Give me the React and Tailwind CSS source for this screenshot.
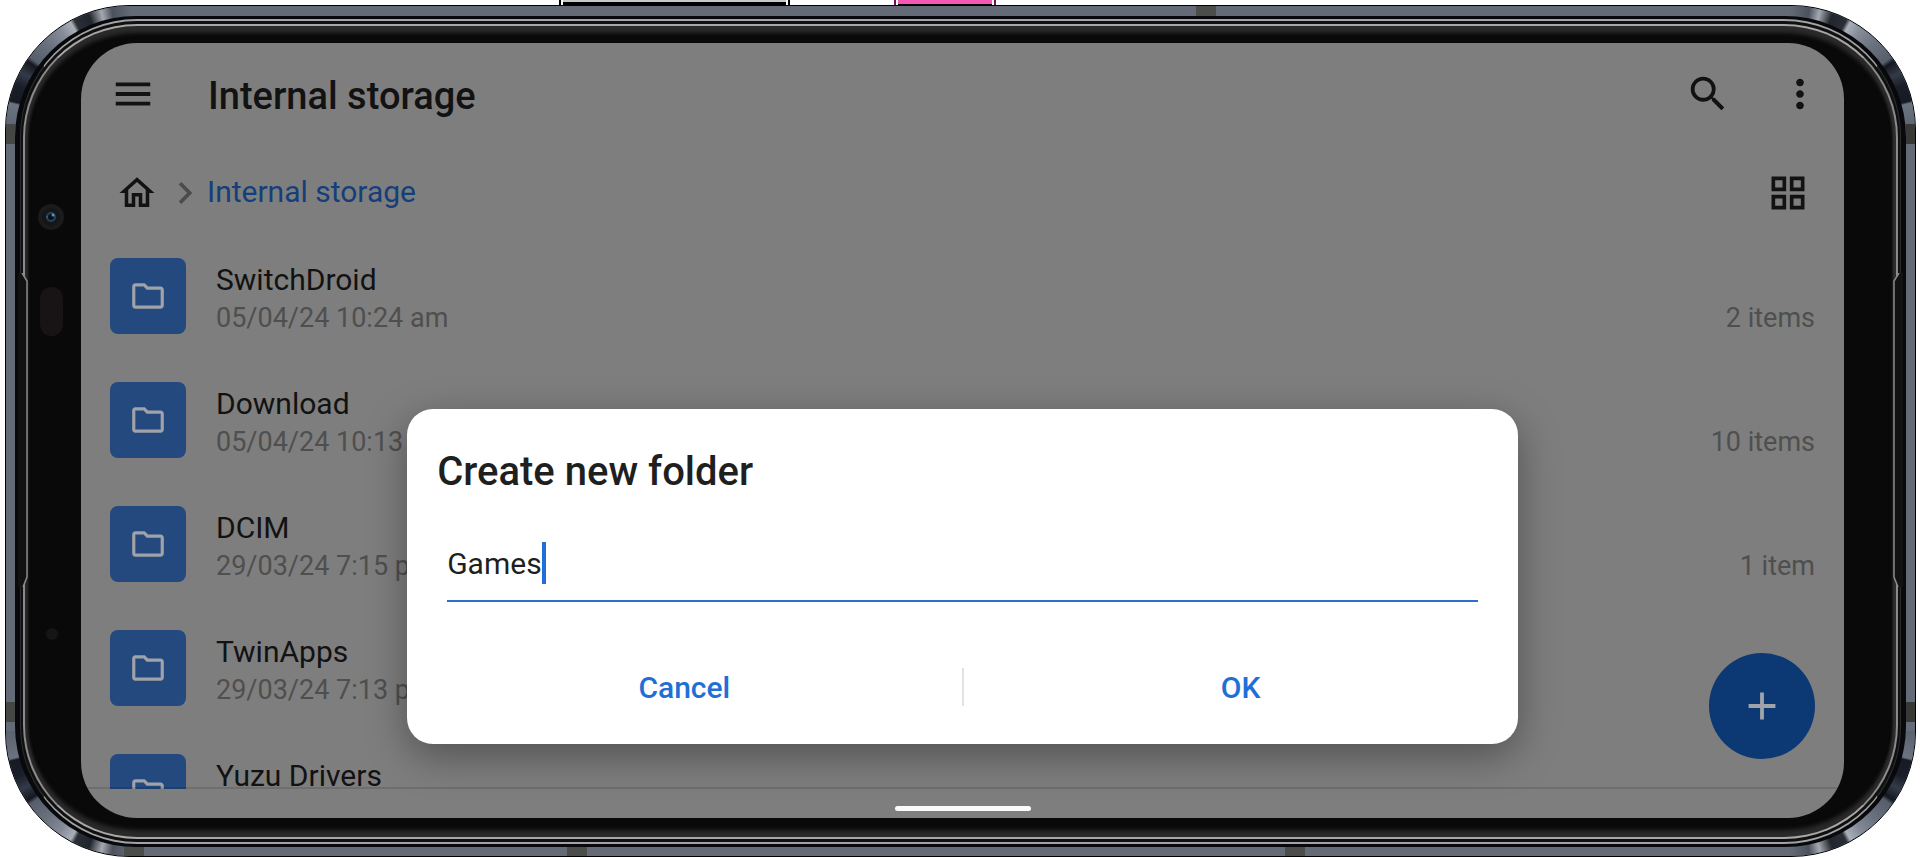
import { useState } from 'react'
import {
  MdAdd,
  MdChevronRight,
  MdMenu,
  MdMoreVert,
  MdOutlineFolder,
  MdOutlineGridView,
  MdOutlineHome,
  MdSearch,
} from 'react-icons/md'

const folders = [
  { name: 'SwitchDroid', date: '05/04/24 10:24 am', count: '2 items' },
  { name: 'Download', date: '05/04/24 10:13 am', count: '10 items' },
  { name: 'DCIM', date: '29/03/24 7:15 pm', count: '1 item' },
  { name: 'TwinApps', date: '29/03/24 7:13 pm', count: '' },
  { name: 'Yuzu Drivers', date: '', count: '' },
]

// Reflections along a quarter turn of the metal rim
function RimCorner({ className }) {
  return (
    <span
      className={`absolute size-[125px] rounded-tl-[124px] bg-[conic-gradient(from_270deg_at_100%_100%,#5b6270_0deg,#6c7380_13deg,#161a22_14deg,#1a1e29_22deg,#343a48_28deg,#14171f_34deg,#565d6b_36deg,#6a717e_46deg,#858c98_55deg,#aab0b9_61deg,#2a2e36_63deg,#20242c_70deg,#a4a9b1_76deg,#4b525e_81deg,#646b77_90deg)] ${className}`}
    />
  )
}

function SideGrip({ className }) {
  return (
    <svg className={`absolute h-[314px] w-[12px] ${className}`} viewBox="0 0 12 314" aria-hidden="true">
      <path d="M0 0H4L9 8V304L5 314H0Z" fill="#121212" />
      <path d="M4 0L9 8V304L5 314" fill="none" stroke="#8a8a8a" strokeWidth="1.5" />
    </svg>
  )
}

function PhoneFrame({ children }) {
  return (
    <div className="relative flex min-h-0 flex-1 rounded-[125px] border border-black bg-[#646b77] px-[9px] pt-[10px] pb-[9px]">
      <RimCorner className="top-0 left-0" />
      <RimCorner className="top-0 right-0 -scale-x-100" />
      <RimCorner className="bottom-0 left-0 -scale-y-100" />
      <RimCorner className="right-0 bottom-0 -scale-100" />

      {/* Antenna bands */}
      <span className="absolute top-0 left-[1190px] h-[10px] w-[20px] bg-[#4b4d4b]" />
      <span className="absolute bottom-0 left-[118px] h-[9px] w-[20px] bg-[#4b4d4b]" />
      <span className="absolute bottom-0 left-[561px] h-[9px] w-[20px] bg-[#4b4d4b]" />
      <span className="absolute bottom-0 left-[1279px] h-[9px] w-[20px] bg-[#4b4d4b]" />
      <span className="absolute top-[118px] left-0 h-[20px] w-[9px] bg-[#454744]" />
      <span className="absolute bottom-[134px] left-0 h-[20px] w-[9px] bg-[#454744]" />
      <span className="absolute top-[118px] right-0 h-[20px] w-[9px] bg-[#383936]" />
      <span className="absolute right-0 bottom-[134px] h-[20px] w-[9px] bg-[#383936]" />

      <div className="relative flex min-w-0 flex-1 rounded-[121px] bg-[#08090c] px-[5px] py-[3px]">
        <div className="flex min-w-0 flex-1 rounded-[117px] border-x border-y-2 border-x-[#2c2c2c] border-y-[#a3a3a5] bg-[#101010] px-[2px] py-[3px]">
          <div className="flex min-w-0 flex-1 rounded-[114px] border-x-2 border-y-2 border-x-[#8b8b8b] border-y-[#a8a6a6] bg-[#090909] pt-[17px] pr-[52px] pb-[19px] pl-[56px] shadow-[inset_0_7px_4px_#2a2a2a,inset_0_-7px_4px_#2a2a2a,inset_3px_0_3px_#2c2c2c,inset_-3px_0_3px_#3a3a3a]">
            {children}
          </div>
        </div>
        <SideGrip className="top-[257px] left-[3px]" />
        <SideGrip className="top-[257px] right-[3px] -scale-x-100" />

        {/* Camera and sensors */}
        <svg className="absolute top-[187px] left-[22px] size-[28px]" viewBox="0 0 28 28" aria-hidden="true">
          <circle cx="14" cy="14" r="13" fill="#1b1b1c" />
          <circle cx="14" cy="14" r="9" fill="#141618" />
          <circle cx="14" cy="14" r="5" fill="#27445c" />
          <circle cx="14" cy="14" r="3" fill="#0a1018" />
          <circle cx="16" cy="12" r="1.5" fill="#5f91b8" />
          <circle cx="10" cy="14" r="1" fill="#38617f" />
        </svg>
        <span className="absolute top-[271px] left-[25px] h-[49px] w-[23px] rounded-full bg-[#181314]" />
        <span className="absolute top-[612px] left-[31px] size-[12px] rounded-full bg-[#151515]" />
      </div>
    </div>
  )
}

function FolderRow({ folder }) {
  return (
    <li className="flex items-start">
      <span className="flex size-[76px] shrink-0 items-center justify-center rounded-lg bg-[#23497f] text-[#a0a3a8]">
        <MdOutlineFolder size={38} />
      </span>
      <div className="ml-[30px] flex-1 pt-[3px]">
        <p className="text-[30px] leading-[38px] text-[#121212]">{folder.name}</p>
        <div className="flex h-[38px] justify-between text-[27px] leading-[38px] text-[#4f4f4f]">
          <span>{folder.date}</span>
          <span>{folder.count}</span>
        </div>
      </div>
    </li>
  )
}

function CreateFolderDialog() {
  const [name, setName] = useState('Games')

  return (
    <div className="absolute inset-0 flex items-end justify-center pb-[74px]">
      <div
        role="dialog"
        aria-labelledby="dialog-title"
        className="w-[63%] rounded-[26px] bg-white pt-10 pb-[38px] shadow-[0_12px_40px_rgba(0,0,0,0.35)]"
      >
        <h2 id="dialog-title" className="px-[30px] text-[40px] leading-[46px] font-medium text-[#1f1f1f]">
          Create new folder
        </h2>
        <div className="mx-10 mt-[46px] flex items-center border-b-2 border-[#2b70c9] pb-[15px]">
          <input
            type="text"
            aria-labelledby="dialog-title"
            value={name}
            onChange={(e) => setName(e.target.value)}
            className="field-sizing-content h-11 text-[30px] text-[#1f1f1f] caret-transparent outline-none"
          />
          <span className="h-[42px] w-[4px] bg-[#1f6fd6]" />
        </div>
        <div className="mt-[66px] flex h-[38px] items-center text-[30px] font-medium text-[#1f6fd6]">
          <button type="button" className="flex-1">
            Cancel
          </button>
          <span className="h-full w-[2px] bg-[#e2e2e2]" />
          <button type="button" className="flex-1">
            OK
          </button>
        </div>
      </div>
    </div>
  )
}

export default function App() {
  return (
    <div className="flex h-screen flex-col overflow-hidden bg-white pr-1 pb-px pl-[5px] font-['Roboto',sans-serif]">
      {/* Side buttons poking out above the frame */}
      <div className="flex h-[5px] shrink-0 gap-[104px] pl-[554px]">
        <div className="w-[231px] border-x-2 border-black px-[2px]">
          <div className="h-full border-b-3 border-black bg-[#c5c8cd]" />
        </div>
        <div className="w-[102px] border-x-2 border-[#6d1549] px-[2px]">
          <div className="h-full border-b border-black bg-[#f458b4]" />
        </div>
      </div>

      <PhoneFrame>
        <div className="relative flex min-w-0 flex-1 flex-col overflow-hidden rounded-[56px] bg-[#7e7e7e]">
          <header className="flex shrink-0 items-center pt-7 pr-[21px] pl-[29px] text-[#121212]">
            <button type="button" aria-label="Menu">
              <MdMenu size={46} />
            </button>
            <h1 className="ml-[52px] flex-1 pt-1 text-[38px] leading-[42px] font-medium">Internal storage</h1>
            <button type="button" aria-label="Search">
              <MdSearch size={46} />
            </button>
            <button type="button" aria-label="More options" className="ml-[46px]">
              <MdMoreVert size={46} />
            </button>
          </header>

          <nav className="mt-[54px] flex h-11 shrink-0 items-center pr-[34px] pl-[35px] text-[#121212]">
            <a href="#home" aria-label="Home">
              <MdOutlineHome size={42} />
            </a>
            <MdChevronRight size={44} className="ml-[5px] text-[#4c4c4c]" />
            <a href="#internal" className="flex-1 pb-[2px] text-[30px] leading-[38px] text-[#143f7b]">
              Internal storage
            </a>
            <button type="button" aria-label="Grid view">
              <MdOutlineGridView size={44} />
            </button>
          </nav>

          <ul className="mt-[43px] flex min-h-0 flex-1 flex-col gap-[45px] overflow-hidden px-[29px]">
            {folders.map((folder) => (
              <FolderRow key={folder.name} folder={folder} />
            ))}
          </ul>

          <div className="flex h-[29px] shrink-0 items-end justify-center pb-[7px] shadow-[0_-2px_0_rgba(0,0,0,0.12)]">
            <span className="h-[5px] w-[136px] rounded-full bg-[#fafafa]" />
          </div>

          <button
            type="button"
            aria-label="New folder"
            className="absolute right-[29px] bottom-[59px] flex size-[106px] items-center justify-center rounded-full bg-[#0c3873] text-[#a0a3a8]"
          >
            <MdAdd size={46} />
          </button>

          <CreateFolderDialog />
        </div>
      </PhoneFrame>
    </div>
  )
}
